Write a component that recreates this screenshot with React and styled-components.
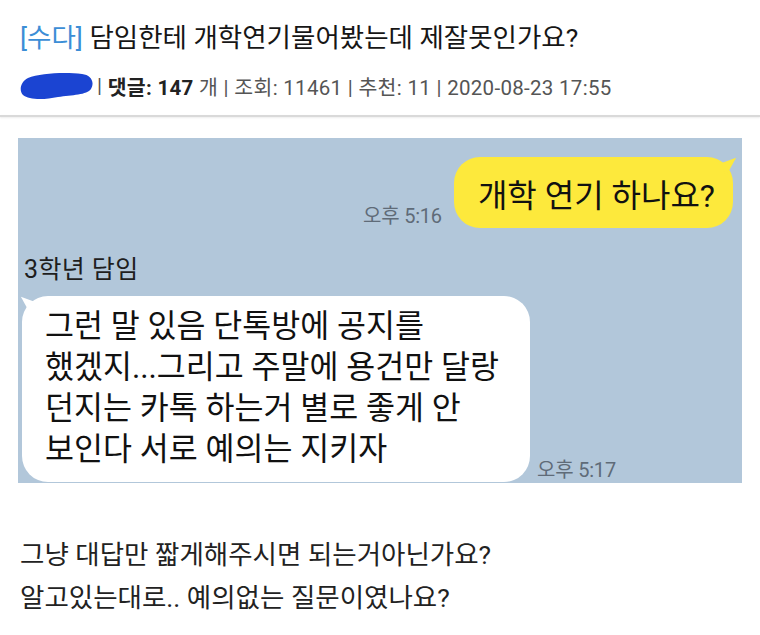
import React from "react";
import styled, { createGlobalStyle } from "styled-components";

const GlobalStyle = createGlobalStyle`
  html, body {
    margin: 0;
    padding: 0;
    background: #ffffff;
  }
  body {
    font-family: Roboto, "Noto Sans CJK KR", sans-serif;
    color: #1a1a1a;
  }
`;

const Page = styled.div`
  width: 760px;
  height: 635px;
  overflow: hidden;
  background: #fff;
`;

const Header = styled.header`
  padding: 21px 0 0 20px;
`;

const Title = styled.h1`
  margin: 0;
  font-size: 26.5px;
  line-height: 34px;
  font-weight: 400;
  color: #161616;
`;

const Category = styled.span`
  color: #3c8ed6;
`;

const Meta = styled.div`
  display: flex;
  align-items: center;
  margin-top: 17px;
  height: 28px;
  font-size: 20.5px;
  letter-spacing: 0.3px;
  color: #555;
  white-space: pre;
`;

const Strong = styled.b`
  color: #222;
  font-weight: 700;
`;

const Divider = styled.hr`
  margin: 15px 0 0;
  border: none;
  height: 2px;
  background: #d9d9d9;
  box-shadow: 0 1px 2px rgba(0, 0, 0, 0.08);
`;

const Chat = styled.section`
  margin: 21px 18px 0 18px;
  padding: 19px 9px 1px 4px;
  background: #b2c7da;
`;

const SentRow = styled.div`
  display: flex;
  justify-content: flex-end;
  align-items: flex-end;
  gap: 12px;
`;

const Time = styled.span`
  font-size: 20px;
  line-height: 22px;
  letter-spacing: -0.2px;
  color: #5f6b78;
  padding-bottom: ${(p) => p.$pb || 0}px;
`;

const Bubble = styled.div`
  position: relative;
  border-radius: 26px;
  background: ${(p) => (p.$mine ? "#fde93c" : "#ffffff")};
  color: #111;

  &::after {
    content: "";
    position: absolute;
    top: 3px;
    ${(p) => (p.$mine ? "right: -6px;" : "left: -4px;")}
    width: 0;
    height: 0;
    border-style: solid;
    ${(p) =>
      p.$mine
        ? "border-width: 0 0 14px 16px; border-color: transparent transparent transparent #fde93c; transform: rotate(-20deg);"
        : "border-width: 0 16px 14px 0; border-color: transparent #ffffff transparent transparent; transform: rotate(20deg);"}
  }
`;

const SentBubble = styled(Bubble)`
  padding: 0 18px 0 24px;
  height: 71px;
  display: flex;
  align-items: center;
  font-size: 32px;
`;

const Sender = styled.div`
  margin: 29px 0 0 2px;
  font-size: 25px;
  line-height: 26px;
  letter-spacing: 0.4px;
  color: #1e1e1e;
`;

const ReceivedRow = styled.div`
  display: flex;
  align-items: flex-end;
  gap: 7px;
  margin-top: 13px;
`;

const ReceivedBubble = styled(Bubble)`
  width: 508px;
  box-sizing: border-box;
  padding: 10px 8px 12px 23px;
  font-size: 31.5px;
  line-height: 41px;
`;

const Body = styled.div`
  padding: 50px 0 0 20px;
  font-size: 26.5px;
  line-height: 43px;
  color: #222;
`;

function Scribble() {
  return (
    <svg width="74" height="28" viewBox="0 0 74 28" style={{ marginRight: 3 }}>
      <path
        d="M8 6 C20 1 46 0 62 2 C71 3 75 10 71 17 C67 23 52 23 38 25 C24 28 9 28 3 23 C-1 19 0 10 8 6 Z"
        fill="#1b44d2"
      />
    </svg>
  );
}

function App() {
  return (
    <Page>
      <GlobalStyle />
      <Header>
        <Title>
          <Category>[수다]</Category> 담임한테 개학연기물어봤는데 제잘못인가요?
        </Title>
        <Meta>
          <Scribble />
          {"| "}
          <Strong>댓글: 147</Strong>
          {" 개 | 조회: 11461 | 추천: 11 | 2020-08-23 17:55"}
        </Meta>
      </Header>
      <Divider />
      <Chat>
        <SentRow>
          <Time $pb={1}>오후 5:16</Time>
          <SentBubble $mine>개학 연기 하나요?</SentBubble>
        </SentRow>
        <Sender>3학년 담임</Sender>
        <ReceivedRow>
          <ReceivedBubble>
            그런 말 있음 단톡방에 공지를
            <br />
            했겠지...그리고 주말에 용건만 달랑
            <br />
            던지는 카톡 하는거 별로 좋게 안
            <br />
            보인다 서로 예의는 지키자
          </ReceivedBubble>
          <Time $pb={1}>오후 5:17</Time>
        </ReceivedRow>
      </Chat>
      <Body>
        그냥 대답만 짧게해주시면 되는거아닌가요?
        <br />
        알고있는대로.. 예의없는 질문이였나요?
      </Body>
    </Page>
  );
}

export default App;
